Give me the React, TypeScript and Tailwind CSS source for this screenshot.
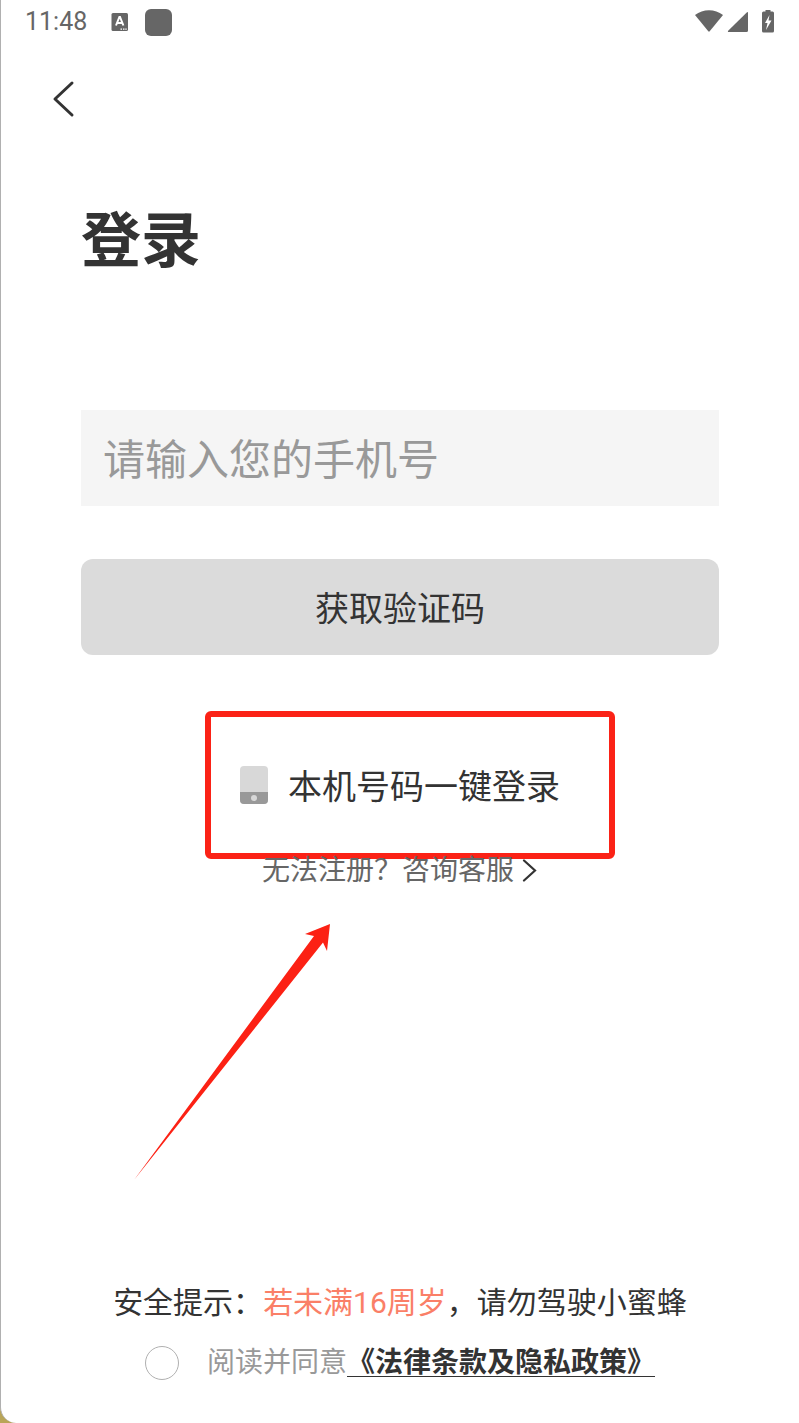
import { useState } from 'react';

function StatusBar() {
  return (
    <div className="flex h-11 items-center justify-between px-6 text-[#666666]">
      <div className="flex items-center">
        <span className="text-[25px] leading-8">11:48</span>
        <svg className="ml-6 h-5 w-[18px]" viewBox="0 0 18 20" aria-hidden="true">
          <rect x="0.5" y="1" width="16.5" height="18" rx="1.5" fill="currentColor" />
          <path d="M5 13.5 8.4 5h.6l3.4 8.5M6.3 11h4.8" fill="none" stroke="#fff" strokeWidth="2" />
          <path d="M9.5 17.2h1.5M12 17.2h1.5M14.3 17.2h1.4" stroke="#fff" strokeWidth="1.2" />
        </svg>
        <span className="ml-4 size-[27px] rounded-md bg-[#666666]" />
      </div>
      <svg className="h-6 w-20" viewBox="0 0 80 24" fill="currentColor" aria-hidden="true">
        <path d="M0 5C8 -1.3 20 -1.3 28 5L14.7 21.3Q14 22 13.3 21.3Z" />
        <path d="M53 3V20.5Q53 22 51.5 22H34Q32 22 33.4 20.5L52 2.3Q53 1.4 53 3Z" />
        <path
          fillRule="evenodd"
          d="M70.5 0h5v1.500h2q1.500 0 1.500 1.500v18q0 1.500-1.500 1.500h-9q-1.500 0-1.500-1.500v-18q0-1.500 1.500-1.500h2zM74.5 5 70 13h2.500l-1.500 7 5.500-9.500h-3z"
        />
      </svg>
    </div>
  );
}

function PhoneIcon() {
  return (
    <svg className="h-[38px] w-7" viewBox="0 0 28 38" aria-hidden="true">
      <rect width="28" height="38" rx="4" fill="#d8d8d8" />
      <path d="M0 26h28v8q0 4-4 4H4q-4 0-4-4z" fill="#999" />
      <circle cx="14" cy="32" r="3" fill="#d8d8d8" />
    </svg>
  );
}

export default function App() {
  const [phone, setPhone] = useState('');
  const [agreed, setAgreed] = useState(false);

  return (
    <div className="min-h-screen bg-[#b9a558] font-[Roboto,'Noto_Sans_CJK_SC',sans-serif]">
      <div className="flex min-h-screen flex-col rounded-bl-2xl border-l border-[#b0b0b0] bg-white text-[#333333]">
        <StatusBar />

        <header className="px-12 pt-9">
          <button type="button" aria-label="返回" className="flex h-10 w-8 items-center">
            <svg className="h-10 w-7" viewBox="0 0 28 40" fill="none" stroke="currentColor" strokeWidth="3" strokeLinecap="round" strokeLinejoin="round">
              <path d="M23 3 6 19 23 35" />
            </svg>
          </button>
        </header>

        <main className="flex flex-col px-20">
          <h1 className="mt-[82px] text-[60px] leading-20 font-bold">登录</h1>

          <form className="mt-32 flex flex-col" onSubmit={(e) => e.preventDefault()}>
            <input
              type="tel"
              aria-label="手机号"
              value={phone}
              onChange={(e) => setPhone(e.target.value)}
              placeholder="请输入您的手机号"
              className="h-24 w-full bg-[#f5f5f5] px-[22px] pt-1 text-[42px] outline-none placeholder:text-[#999999]"
            />
            <button type="submit" className="mt-[53px] h-24 rounded-xl bg-[#dbdbdb] pt-1 text-[34px]">
              获取验证码
            </button>
          </form>

          {/* One-tap login with the highlight frame over it */}
          <div className="relative mt-14 flex h-[148px] justify-center">
            <button type="button" className="flex items-center gap-5 text-[34px]">
              <PhoneIcon />
              <span className="pt-1">本机号码一键登录</span>
            </button>
            <div className="pointer-events-none absolute inset-y-0 left-1/2 ml-[-195px] w-[410px] rounded-md border-6 border-[#fb2216]" />
          </div>

          <div className="relative flex justify-center">
            <a href="#service" className="-mt-2 flex h-10 items-center gap-2 text-[28px] text-[#666666]">
              无法注册？咨询客服
              <svg className="h-6 w-4" viewBox="0 0 16 24" fill="none" stroke="#333" strokeWidth="2.2" strokeLinecap="round">
                <path d="M2 1.5 13 11.500 2 21.500" />
              </svg>
            </a>
            <svg className="pointer-events-none absolute top-[65px] left-1/2 ml-[-266px] h-64 w-[197px]" viewBox="0 0 197 256" aria-hidden="true">
              <path d="M0 256 180 12 171 10 196 0 193 27 189 18.5Z" fill="#fc2114" />
            </svg>
          </div>
        </main>

        <footer className="mt-auto flex flex-col items-center pb-9">
          <p className="text-[30px] leading-12">
            安全提示：<span className="text-[#fa7f67]">若未满16周岁</span>，请勿驾驶小蜜蜂
          </p>
          <div className="mt-3 flex items-center text-[28px] leading-12">
            <input
              id="agree"
              type="checkbox"
              checked={agreed}
              onChange={(e) => setAgreed(e.target.checked)}
              className="size-[34px] appearance-none rounded-full border border-[#b0b0b0] checked:bg-[#fa7f67]"
            />
            <label htmlFor="agree" className="ml-7 text-[#999999]">阅读并同意</label>
            <a href="#terms" className="font-bold underline decoration-1 underline-offset-4">《法律条款及隐私政策》</a>
          </div>
        </footer>
      </div>
    </div>
  );
}
